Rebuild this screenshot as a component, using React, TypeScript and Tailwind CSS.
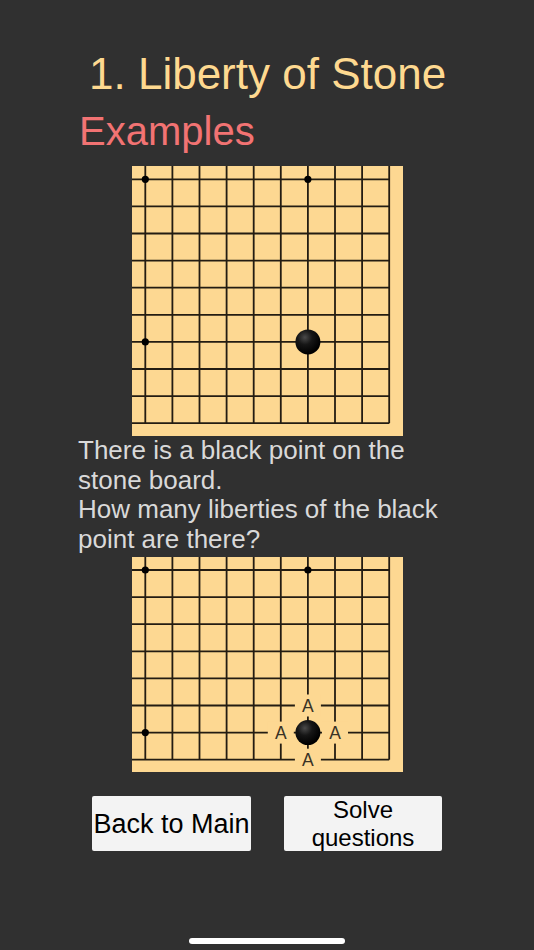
// Lesson page: liberty of a stone, with two board examples

const GAP = 27.1;
const OFFSET = 13.3;
const BOARD_W = 271;

type Label = { col: number; row: number; text: string };

function Board({
  id,
  height,
  rows,
  offsetY,
  labels = [],
}: {
  id: string;
  height: number;
  rows: number;
  offsetY: number;
  labels?: Label[];
}) {
  const cols = 10;
  const gridRight = OFFSET + GAP * (cols - 1);
  const lastRowY = offsetY + GAP * (rows - 1);
  // bottom edge of the board is only drawn if the grid ends inside it
  const lineBottom = lastRowY + 1 < height - 5 ? lastRowY : height;

  const xs = Array.from({ length: cols }, (_, i) => OFFSET + GAP * i);
  const ys = Array.from({ length: rows }, (_, j) => offsetY + GAP * j);

  const stars = [
    [0, 0],
    [6, 0],
    [0, 6],
  ];
  const stone = { x: xs[6], y: ys[6] };

  return (
    <svg width={BOARD_W} height={height} viewBox={`0 0 ${BOARD_W} ${height}`} className="block">
      <defs>
        <radialGradient id={`stone-${id}`} cx="38%" cy="32%" r="65%">
          <stop offset="0%" stopColor="#4a4a4a" />
          <stop offset="45%" stopColor="#161616" />
          <stop offset="100%" stopColor="#000000" />
        </radialGradient>
      </defs>
      <rect x="0" y="0" width={BOARD_W} height={height} fill="#fdd892" />
      {xs.map((x, i) => (
        <line key={`v${i}`} x1={x} y1={0} x2={x} y2={lineBottom} stroke="#231c12" strokeWidth="1.8" />
      ))}
      {ys.map((y, j) => (
        <line key={`h${j}`} x1={0} y1={y} x2={gridRight} y2={y} stroke="#231c12" strokeWidth="1.8" />
      ))}
      {stars.map(([c, r]) => (
        <circle key={`s${c}-${r}`} cx={xs[c]} cy={ys[r]} r="3.6" fill="#000" />
      ))}
      {labels.map((l) => (
        <g key={`l${l.col}-${l.row}`}>
          <rect
            x={xs[l.col] - 13}
            y={ys[l.row] - 11}
            width="26"
            height="22"
            fill="#fdd892"
          />
          <text
            x={xs[l.col]}
            y={ys[l.row] + 6.3}
            textAnchor="middle"
            fontSize="17.5"
            fill="#3a3325"
            fontFamily="'Liberation Sans', Arial, sans-serif"
          >
            {l.text}
          </text>
        </g>
      ))}
      <circle cx={stone.x} cy={stone.y} r="12.5" fill={`url(#stone-${id})`} />
    </svg>
  );
}

export default function App() {
  const liberties: Label[] = [
    { col: 6, row: 5, text: "A" },
    { col: 5, row: 6, text: "A" },
    { col: 7, row: 6, text: "A" },
    { col: 6, row: 7, text: "A" },
  ];

  return (
    <div className="min-h-screen w-full bg-[#303030] font-['Liberation_Sans',Arial,sans-serif] flex flex-col">
      {/* HEADER */}
      <h1 className="mt-[52px] pl-[89px] text-[44px] leading-[44px] text-[#fed990] font-normal">
        1. Liberty of Stone
      </h1>
      <h2 className="mt-[15px] pl-[79px] text-[40px] leading-[40px] text-[#f27373] font-normal">
        Examples
      </h2>

      {/* FIRST EXAMPLE */}
      <div className="mt-[15px] flex justify-center">
        <Board id="a" height={270} rows={10} offsetY={13.3} />
      </div>

      <p className="pl-[78px] w-[450px] text-[26px] leading-[29.5px] text-[#d9d9d9]">
        There is a black point on the stone board.
        <br />
        How many liberties of the black point are there?
      </p>

      {/* ANSWER EXAMPLE */}
      <div className="mt-[3px] flex justify-center">
        <Board id="b" height={215} rows={8} offsetY={13} labels={liberties} />
      </div>

      {/* BUTTONS */}
      <div className="mt-[24px] flex justify-center gap-[33px]">
        <button className="w-[159px] h-[55px] bg-[#f3f3f3] rounded-[2px] text-black text-[27px] leading-[30px] whitespace-nowrap flex items-center justify-center">
          Back to Main
        </button>
        <button className="w-[158px] h-[55px] bg-[#f3f3f3] rounded-[2px] text-black text-[24px] leading-[28px] flex items-center justify-center">
          Solve
          <br />
          questions
        </button>
      </div>

      {/* HOME INDICATOR */}
      <div className="mt-auto mb-[6px] flex justify-center">
        <div className="w-[156px] h-[6px] rounded-full bg-white" />
      </div>
    </div>
  );
}
